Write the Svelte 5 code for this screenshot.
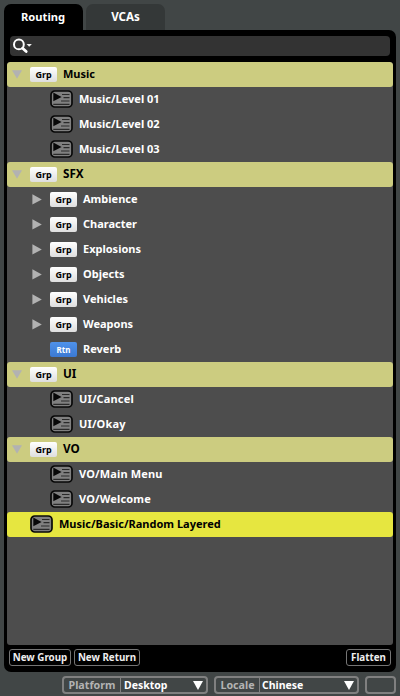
<script>
  const rows = [
    { t: 'Music', k: 'head' },
    { t: 'Music/Level 01', k: 'event' },
    { t: 'Music/Level 02', k: 'event' },
    { t: 'Music/Level 03', k: 'event' },
    { t: 'SFX', k: 'head caps' },
    { t: 'Ambience', k: 'group' },
    { t: 'Character', k: 'group' },
    { t: 'Explosions', k: 'group' },
    { t: 'Objects', k: 'group' },
    { t: 'Vehicles', k: 'group' },
    { t: 'Weapons', k: 'group' },
    { t: 'Reverb', k: 'return' },
    { t: 'UI', k: 'head caps' },
    { t: 'UI/Cancel', k: 'event loose' },
    { t: 'UI/Okay', k: 'event loose' },
    { t: 'VO', k: 'head caps' },
    { t: 'VO/Main Menu', k: 'event loose' },
    { t: 'VO/Welcome', k: 'event loose' },
    { t: 'Music/Basic/Random Layered', k: 'event selected' },
  ];
</script>

<div class="window">
  <nav class="tabs">
    <div class="tab active">Routing</div>
    <div class="tab wide">VCAs</div>
  </nav>

  <section class="panel">
    <div class="search">
      <svg width="24" height="18" viewBox="0 0 24 18">
        <circle cx="6.9" cy="7.4" r="4.9" fill="none" stroke="#fff" stroke-width="2" />
        <path d="M10.6 11.2L14.2 14.6" stroke="#fff" stroke-width="2.8" stroke-linecap="round" />
        <path d="M14.5 7h5.4L17.2 9.7z" fill="#eee" />
      </svg>
    </div>

    <div class="tree">
      {#each rows as r}
        <div class="row {r.k}">
          <span class="toggle">
            {#if r.k.startsWith('head')}
              <svg width="10" height="9" viewBox="0 0 10 9"><path d="M0 .3h10L5 8.8z" fill="#b2b2b2" /></svg>
            {:else if r.k === 'group'}
              <svg width="10" height="11" viewBox="0 0 10 11"><path d="M.4 .2v10.4L9.8 5.4z" fill="#b2b2b2" /></svg>
            {/if}
          </span>
          {#if r.k.startsWith('event')}
            <svg class="icon" width="23" height="18" viewBox="0 0 23 18">
              <rect x="1" y="1" width="21" height="16" rx="3.8" fill="#808080" stroke="#080808" stroke-width="1.7" />
              <path d="M3.3 2.6v8.6L11.6 7z" fill="#080808" />
              <path d="M12 4.5h7.5M13.5 7.7h6M11 11h8.5M3.3 14.4h16.2" stroke="#2a2a2a" stroke-width="1.2" />
            </svg>
          {:else}
            <span class="badge">{r.k === 'return' ? 'Rtn' : 'Grp'}</span>
          {/if}
          <span class="label">{r.t}</span>
        </div>
      {/each}
    </div>

    <div class="actions">
      <div class="btn" style:width="62px">New Group</div>
      <div class="btn" style:width="66px">New Return</div>
      <div class="btn last" style:width="45px">Flatten</div>
    </div>
  </section>

  <footer>
    <div class="select" style:width="146px">
      <span class="name" style:width="56px">Platform</span>
      <span class="value">Desktop</span>
      <svg width="10" height="9" viewBox="0 0 10 9"><path d="M0 0h10L5 9z" fill="#fff" /></svg>
    </div>
    <div class="select second" style:width="145px">
      <span class="name" style:width="43px">Locale</span>
      <span class="value">Chinese</span>
      <svg width="10" height="9" viewBox="0 0 10 9"><path d="M0 0h10L5 9z" fill="#fff" /></svg>
    </div>
    <div class="select blank"></div>
  </footer>
</div>

<style>
  .window {
    width: 400px;
    height: 696px;
    box-sizing: border-box;
    padding: 4px 4px 0;
    background: #414646;
    font: bold 11px/15px 'Noto Sans', 'Open Sans', sans-serif;
    color: #fff;
    overflow: hidden;
  }
  svg { display: block; flex: none; }
  .tabs { display: flex; gap: 3px; height: 26px; }
  .tab {
    width: 79px;
    height: 26px;
    line-height: 26px;
    text-align: center;
    font-size: 11.2px;
    background: #343838;
    border-radius: 7px 7px 0 0;
  }
  .wide { font-size: 11.6px; }
  .tab.active { background: #000; padding-right: 1px; width: 78px; }
  .panel {
    height: 642px;
    box-sizing: border-box;
    padding: 6px 3px 0;
    background: #000;
    border-radius: 0 7px 7px 7px;
  }
  .search {
    height: 20px;
    margin: 0 3px 6px;
    padding: 1px 0 0 2px;
    box-sizing: border-box;
    border-radius: 4px;
    background: #333;
  }
  .tree {
    height: 583px;
    border-radius: 3px;
    background: #4d4d4d;
    overflow: hidden;
  }
  .row { display: flex; align-items: center; height: 25px; }
  .toggle { width: 18px; padding: 0 0 1px 25px; flex: none; }
  .icon { margin-bottom: 1px; }
  .head { background: #cccc80; color: #000; border-radius: 3px; }
  .head .toggle { padding-left: 5px; }
  .caps .label { font-size: 11.7px; }
  .selected { background: #e6e640; color: #000; border-radius: 3px; }
  .selected .toggle { padding-left: 5px; }
  .label { margin-left: 6px; padding-bottom: 2px; white-space: pre; }
  .loose .label { letter-spacing: 0.15px; }
  .badge {
    width: 27px;
    height: 15px;
    border-radius: 2px;
    background: linear-gradient(#fff, #dedede);
    color: #000;
    font-size: 9px;
    line-height: 16px;
    text-align: center;
  }
  .return .badge { background: linear-gradient(#4f92ea, #3b79d3); color: #fff; font-size: 8px; }
  .actions { display: flex; gap: 3px; padding: 4px 2px 0; }
  .btn {
    height: 17px;
    box-sizing: border-box;
    border: 1px solid #757575;
    border-radius: 3px;
    font-size: 9.8px;
    line-height: 15px;
    text-align: center;
    white-space: nowrap;
    color: #eee;
  }
  .last { margin-left: auto; }
  footer { display: flex; padding: 4px 0 0 58px; }
  .select {
    display: flex;
    align-items: center;
    height: 18px;
    box-sizing: border-box;
    border: 2px solid #808080;
    border-radius: 4px;
    padding-right: 3px;
  }
  .name {
    height: 14px;
    line-height: 14px;
    font-size: 10.7px;
    text-align: center;
    border-right: 1px solid #808080;
    color: #b3b3b3;
  }
  .value { flex: 1; padding-left: 3px; line-height: 14px; font-size: 10.5px; }
  .second { margin-left: 6px; }
  .second .value { padding-left: 2px; }
  .blank { width: 31px; margin-left: 6px; }
</style>
